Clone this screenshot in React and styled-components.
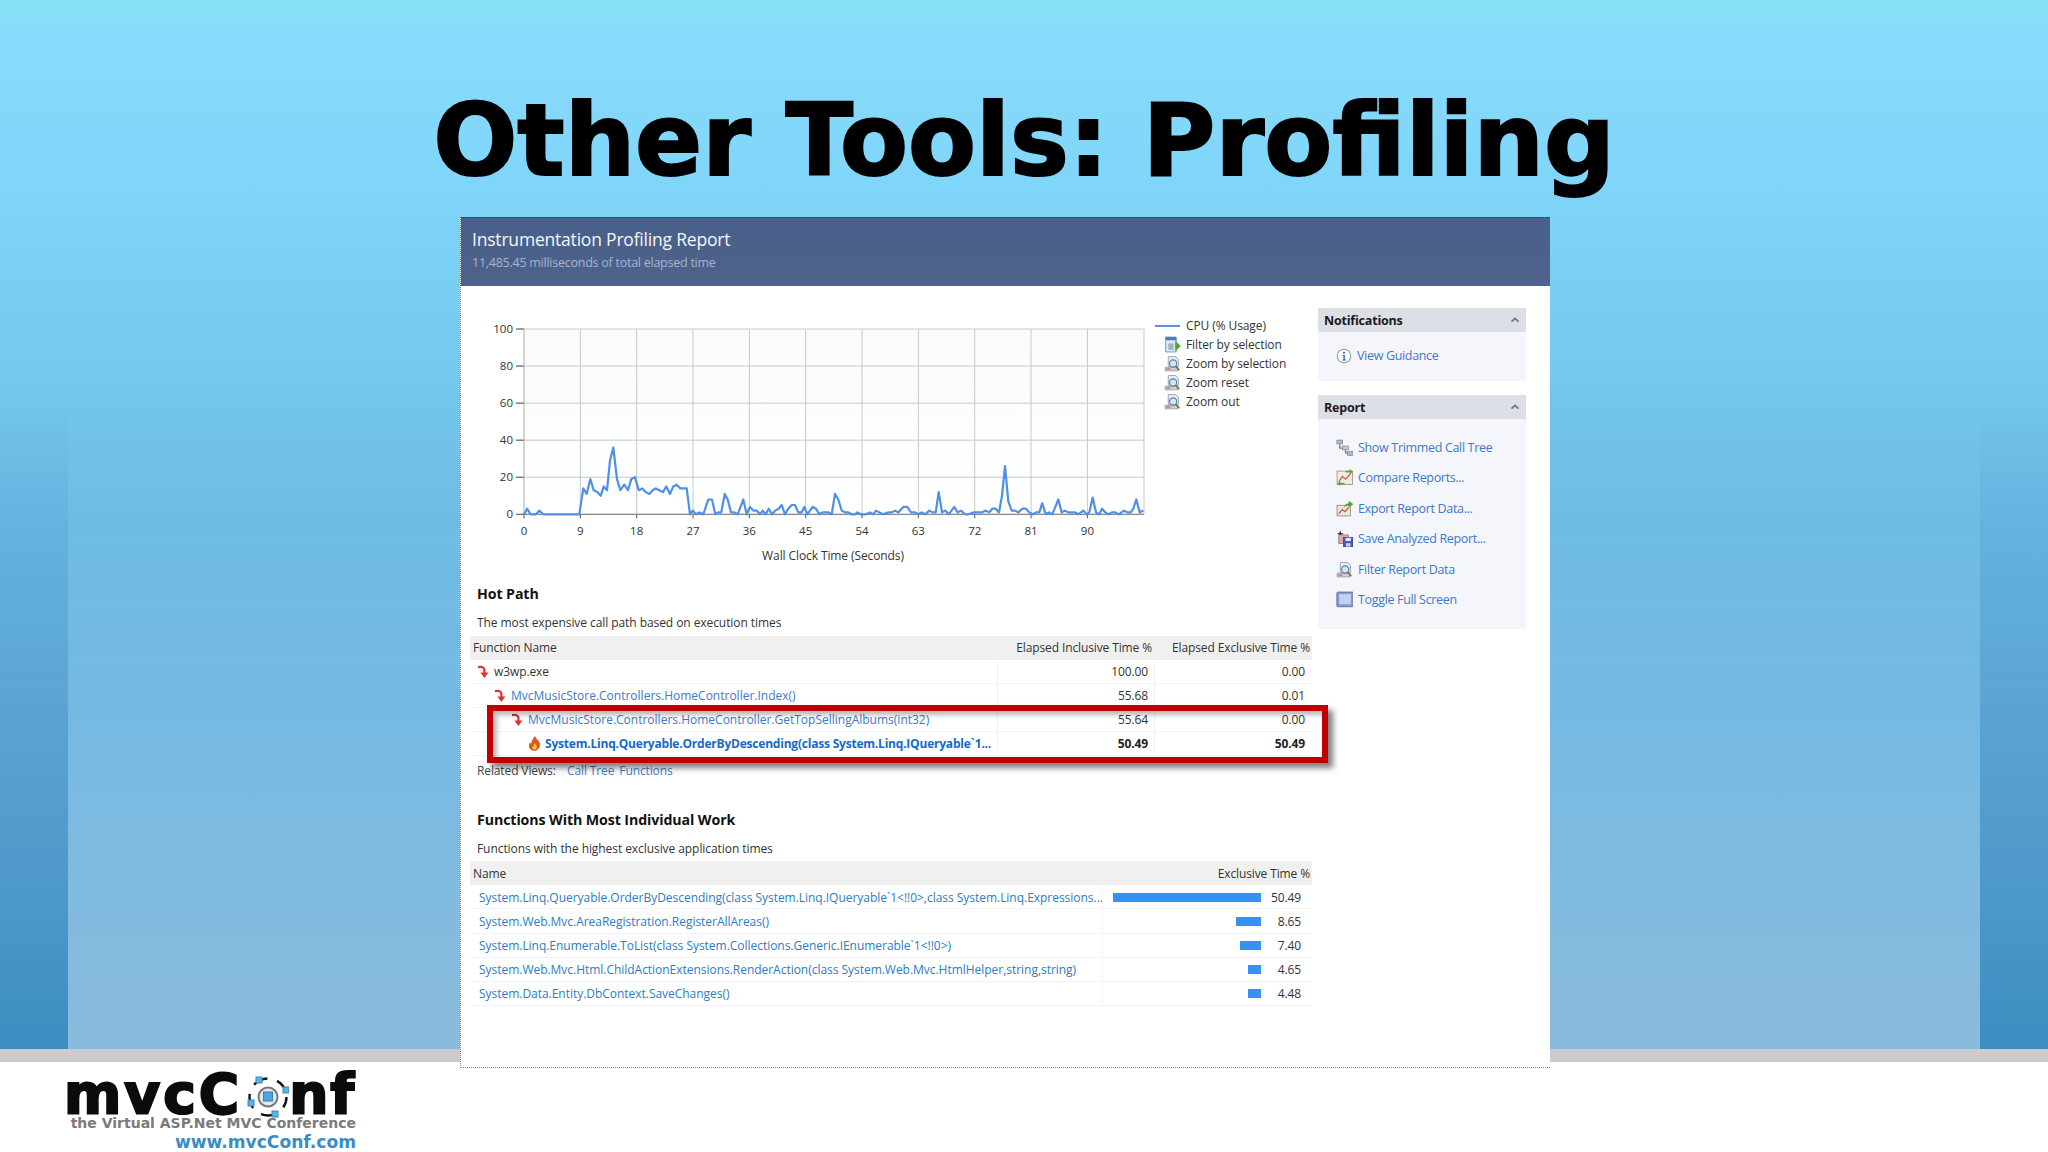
import React from "react";
import styled, { createGlobalStyle } from "styled-components";

const UI = `"Open Sans", "Noto Sans", sans-serif`;

const Global = createGlobalStyle`
  html, body { margin: 0; padding: 0; background: #fff; }
  * { box-sizing: border-box; }
`;

const Slide = styled.div`
  width: 2048px;
  height: 1152px;
  overflow: hidden;
  display: flex;
  flex-direction: column;
  font-family: ${UI};
  background:
    linear-gradient(#cdcbcb, #cdcbcb) 0 1049px / 100% 13px no-repeat,
    linear-gradient(rgba(60,141,194,0) 0, rgba(60,141,194,0) 400px, #3c8dc2 1049px) 0 0 / 68px 1049px no-repeat,
    linear-gradient(rgba(60,141,194,0) 0, rgba(60,141,194,0) 400px, #3c8dc2 1049px) 100% 0 / 68px 1049px no-repeat,
    linear-gradient(#82e2f5 0, #88dcfb 30px, #80d6fa 180px, #78cdf2 300px, #6ebce6 520px, #74b9e3 700px, #80bbe0 880px, #8abbdc 1049px) 0 0 / 100% 1049px no-repeat,
    #fff;
`;

const Title = styled.h1`
  margin: 0;
  height: 218px;
  padding-top: 91px;
  text-align: center;
  font: bold 99px/1 "DejaVu Sans", sans-serif;
  color: #000;
  -webkit-text-stroke: 2px #000;
`;

const Panel = styled.section`
  margin-left: 460px;
  width: 1090px;
  height: 851px;
  flex: none;
  background: #fff;
  border-left: 1px dotted #7a8a90;
  border-bottom: 1px dotted #888;
`;

const PanelHeader = styled.header`
  height: 69px;
  padding: 10px 0 0 11px;
  background: linear-gradient(#47608a, #4f628b);
  border-top: 1px dotted #2c3a55;
`;

const PanelTitle = styled.div`
  font-size: 17.5px;
  line-height: 22px;
  color: #f4f6fa;
  letter-spacing: -0.2px;
`;

const PanelSub = styled.div`
  margin-top: 5px;
  font-size: 12.5px;
  line-height: 16px;
  color: #a6b4cd;
  letter-spacing: -0.25px;
`;

const PanelBody = styled.div`
  display: flex;
`;

const Main = styled.div`
  width: 857px;
  padding-top: 24px;
  flex: none;
`;

const ChartBlock = styled.div`
  display: flex;
  height: 274px;
  margin-left: 9px;
  gap: 5px;
`;

const ChartSvg = styled.svg`
  width: 680px;
  height: 260px;
  flex: none;
  overflow: visible;
  font-family: ${UI};
  font-size: 11.5px;
  fill: #333;
`;

const Legend = styled.div`
  margin-top: 6px;
  flex: none;
  width: 170px;
`;

const LegendRow = styled.div`
  display: grid;
  grid-template-columns: 26px 1fr;
  column-gap: 5px;
  align-items: center;
  height: 19px;
  font-size: 12px;
  letter-spacing: -0.1px;
  color: #333;
  white-space: nowrap;
  & > svg { justify-self: end; }
`;

const LegendLine = styled.span`
  display: block;
  height: 2px;
  width: 25px;
  background: #5c8fdc;
`;

const Section = styled.div`
  padding-left: 16px;
  margin-top: ${p => p.$top || 0}px;
`;

const Heading = styled.h2`
  margin: 0;
  font-size: 14.2px;
  font-weight: 700;
  line-height: 20px;
  color: #111;
  letter-spacing: -0.1px;
`;

const Caption = styled.p`
  margin: 9px 0 2.5px;
  font-size: 12px;
  line-height: 20px;
  color: #333;
  letter-spacing: -0.07px;
`;

const TableWrap = styled.div`
  position: relative;
  margin-left: -7px;
  width: 842px;
`;

const HeadRow = styled.div`
  display: grid;
  grid-template-columns: ${p => p.$cols};
  height: 24px;
  align-items: center;
  background: #f0f0f0;
  font-size: 12px;
  letter-spacing: -0.12px;
  color: #333;
`;

const HeadCell = styled.div`
  padding: 0 ${p => p.$right ? "2px" : "0"} 0 ${p => p.$right ? "0" : "3px"};
  text-align: ${p => p.$right ? "right" : "left"};
  white-space: nowrap;
`;

const Row = styled.div`
  display: grid;
  grid-template-columns: ${p => p.$cols};
  height: 24.1px;
  padding-top: 1px;
  align-items: stretch;
  border-bottom: 1px solid #f2f4f6;
  font-size: 12px;
  letter-spacing: -0.1px;
  color: #333;
`;

const NameCell = styled.div`
  display: flex;
  align-items: center;
  gap: 4px;
  padding-left: ${p => p.$indent}px;
  white-space: nowrap;
  overflow: hidden;
`;

const NumCell = styled.div`
  display: flex;
  align-items: center;
  justify-content: flex-end;
  padding-right: ${p => p.$pad || 6}px;
  border-left: 1px solid #f0f2f4;
  font-weight: ${p => p.$bold ? 700 : 400};
  color: ${p => p.$bold ? "#222" : "#333"};
`;

const PlainName = styled.span`
  color: #333;
`;

const FuncLink = styled.a`
  color: ${p => p.$bold ? "#1669c7" : "#3f78cc"};
  font-weight: ${p => p.$bold ? 700 : 400};
  letter-spacing: ${p => p.$bold ? "-0.21px" : "0"};
`;

const WorkLink = styled.a`
  color: #2c7cc6;
  letter-spacing: -0.03px;
`;

const Highlight = styled.div`
  position: absolute;
  left: 17px;
  top: 69px;
  width: 841px;
  height: 58px;
  border: 6.5px solid #c00000;
  box-shadow: 5px 5px 6px rgba(0,0,0,.5), inset 4px 4px 5px rgba(0,0,0,.28);
  pointer-events: none;
`;

const Related = styled.div`
  display: flex;
  margin-top: 5px;
  height: 20px;
  align-items: center;
  font-size: 12px;
  letter-spacing: -0.12px;
  color: #444;
`;

const RelatedLabel = styled.span`
  width: 90px;
`;

const RelatedLink = styled.a`
  color: #3f86c8;
  margin-right: 5px;
`;

const BarCell = styled.div`
  display: grid;
  grid-template-columns: 158px 1fr;
  align-items: center;
  border-left: 1px solid #f0f2f4;
`;

const BarTrack = styled.div`
  display: flex;
  justify-content: flex-end;
`;

const Bar = styled.div`
  height: 9px;
  background: #3592f5;
`;

const BarValue = styled.span`
  text-align: right;
  padding-right: 11px;
`;

const Side = styled.aside`
  width: 208px;
  padding-top: 22px;
  flex: none;
  display: flex;
  flex-direction: column;
  gap: 14px;
`;

const Card = styled.div`
  background: #f5f6fb;
  padding-bottom: ${p => p.$pb}px;
`;

const CardHead = styled.div`
  display: flex;
  justify-content: space-between;
  align-items: center;
  height: 24px;
  padding: 0 6px 0 6px;
  background: #dcdfe5;
  font-size: 12.5px;
  font-weight: 700;
  letter-spacing: -0.2px;
  color: #1a1a1a;
`;

const CardBody = styled.div`
  padding: ${p => p.$pt}px 0 0 18px;
`;

const ActionRow = styled.div`
  display: flex;
  align-items: center;
  gap: 5px;
  height: 30.5px;
  font-size: 12.5px;
  letter-spacing: -0.33px;
  color: #3f78cc;
  white-space: nowrap;
`;

const Footer = styled.footer`
  padding: 6px 0 0 68px;
`;

const Logo = styled.div`
  width: 288px;
  display: flex;
  flex-direction: column;
  align-items: flex-end;
`;

const LogoWord = styled.div`
  display: flex;
  width: 292px;
  height: 42px;
  align-items: flex-end;
  font: bold 55px/42px "DejaVu Sans", sans-serif;
  color: #0b0b0b;
  -webkit-text-stroke: 2.2px #0b0b0b;
  white-space: nowrap;
`;

const LogoPart = styled.span`
  letter-spacing: ${p => p.$ls}px;
  line-height: 44px;
`;

const LogoTag = styled.div`
  margin-top: 0;
  font: bold 14px/15px "DejaVu Sans", sans-serif;
  color: #7b7b7b;
  white-space: nowrap;
`;

const LogoUrl = styled.div`
  margin-top: 1px;
  font: bold 17.1px/20px "DejaVu Sans", sans-serif;
  color: #3a8cc4;
  white-space: nowrap;
`;

/* ---------- icons ---------- */

const Ic = ({ w = 14, h = 14, vb = "0 0 16 16", children }) => (
  <svg width={w} height={h} viewBox={vb} style={{ flex: "none" }}>{children}</svg>
);

const HotArrow = () => (
  <Ic w={13} h={14} vb="0 0 13 14">
    <path d="M1 2.2 C4 1.6 7 1.8 7.4 4.4 L7.4 8" fill="none" stroke="#d8362c" strokeWidth="2.2" />
    <path d="M3.4 7.4 L11.4 7.4 L7.4 13 Z" fill="#d8362c" />
  </Ic>
);

const Flame = () => (
  <Ic w={13} h={15} vb="0 0 13 15">
    <path d="M6.8 .6 C7.4 3 9.2 3.4 10.6 5.6 C12.6 8.8 11.4 14 6.4 14.4 C1.8 14.4 .4 10.2 2 7 C2.6 8 3 8.4 3.6 8.6 C3.4 5.6 5.2 3.4 6.8 .6 Z" fill="#e2571e" stroke="#c9361a" strokeWidth=".7" />
    <path d="M6.6 7 C7.4 8.4 9 9.2 8.8 11.2 C8.6 13 7.4 13.6 6.4 13.6 C4.8 13.6 3.8 12.2 4.4 10.4 C5 10.8 5.4 10.8 5.6 10.6 C5.4 9.4 6 8 6.6 7 Z" fill="#fbc64a" />
  </Ic>
);

const Magnify = () => (
  <>
    <path d="M4 1.5 H11 L13.5 4 V11 H4 Z" fill="#e8eef5" stroke="#8d99a8" strokeWidth=".8" />
    <path d="M1 11.5 H13 V15 H1 Z" fill="#c9ced8" stroke="#8b8f9c" strokeWidth=".6" />
    <path d="M2 13.2 H6" stroke="#c85a5a" strokeWidth="1" />
    <circle cx="8.6" cy="8" r="3.4" fill="#cfe8f7" stroke="#5f7f9e" strokeWidth="1.1" />
    <path d="M11 10.6 L14.4 14.4" stroke="#8a6a24" strokeWidth="1.6" />
  </>
);

const ZoomIcon = () => <Ic w={17} h={17}><Magnify /></Ic>;

const FilterIcon = () => (
  <Ic w={17} h={17}>
    <path d="M1.5 1 H11.5 V15 H1.5 Z" fill="#dfe9f5" stroke="#6f8fb8" strokeWidth=".8" />
    <path d="M1.5 1 H11.5 V4 H1.5 Z" fill="#4c7cc0" />
    <path d="M4 7 H9 V13 H4 Z" fill="#9fb4cc" />
    <path d="M10.5 4.5 L15.8 9.5 L10.5 14.5 Z" fill="#48a832" />
  </Ic>
);

const InfoIcon = () => (
  <Ic w={16} h={16}>
    <circle cx="8" cy="8" r="6.8" fill="#fbfcfe" stroke="#8d9db5" strokeWidth="1.1" />
    <circle cx="8" cy="4.8" r="1.1" fill="#4a70a8" />
    <path d="M6.6 7 H8.9 V11.4 H10 V12.4 H6.4 V11.4 H7.4 V8 H6.6 Z" fill="#4a70a8" />
  </Ic>
);

const TreeIcon = () => (
  <Ic w={17} h={17}>
    <path d="M3.5 5 V8.5 H8 M9 9 V13 H12" fill="none" stroke="#5a9a3c" strokeWidth="1.2" />
    <rect x=".8" y="1" width="5.4" height="3.6" fill="#aeb9cb" stroke="#6f7c92" strokeWidth=".6" />
    <rect x="6.2" y="6.6" width="5.4" height="3.6" fill="#c3ccda" stroke="#6f7c92" strokeWidth=".6" />
    <rect x="11" y="11.8" width="5" height="3.6" fill="#aeb9cb" stroke="#6f7c92" strokeWidth=".6" />
  </Ic>
);

const CompareIcon = () => (
  <Ic w={17} h={17}>
    <rect x="1" y="2" width="14.5" height="12.5" fill="#f4ecdf" stroke="#9a9488" strokeWidth=".8" />
    <path d="M2.5 12 L6 7 L9 9.5 L14 4" fill="none" stroke="#d25050" strokeWidth="1.1" />
    <path d="M9 1.6 H13 V0 L16 2.6 L13 5 V3.4 H9 Z" fill="#58a83c" />
    <path d="M8 13 H4 V11.4 L1 13.8 L4 16 V14.6 H8 Z" fill="#58a83c" />
  </Ic>
);

const ExportIcon = () => (
  <Ic w={17} h={17}>
    <rect x="1" y="5" width="12.5" height="10" fill="#ece6dc" stroke="#8e8a80" strokeWidth=".8" />
    <path d="M2.5 13 L6 9 L8.5 11 L12 7" fill="none" stroke="#d25050" strokeWidth="1.2" />
    <path d="M7.5 7 C8 4 10 3 12 3 V.8 L16.2 4 L12 7 V5.2 C10.4 5.2 9 5.8 7.5 7 Z" fill="#4ea636" />
  </Ic>
);

const SaveIcon = () => (
  <Ic w={17} h={17}>
    <path d="M4 .6 L5 3 L7.4 3.4 L5 4.4 L4 6.8 L3 4.4 L.8 3.4 L3 3 Z" fill="#1c2230" />
    <rect x="2.6" y="4.6" width="9" height="8" fill="#d9a9a9" stroke="#8e6f78" strokeWidth=".7" />
    <rect x="7" y="7" width="9" height="9" fill="#4a56b8" stroke="#2f3680" strokeWidth=".6" />
    <rect x="9" y="7.4" width="5" height="3" fill="#e7eaf6" />
    <rect x="9.4" y="12.4" width="4.2" height="3.2" fill="#c7cce6" />
  </Ic>
);

const FullIcon = () => (
  <Ic w={17} h={17}>
    <rect x=".8" y="1" width="15.4" height="13.8" rx="1" fill="#8d99c8" stroke="#5a6aa0" strokeWidth=".8" />
    <rect x="3" y="3" width="11" height="9.4" fill="#bcd4f2" />
  </Ic>
);

const Chevron = () => (
  <Ic w={10} h={9} vb="0 0 10 9">
    <path d="M1.5 5.6 L5 2.4 L8.5 5.6" fill="none" stroke="#6f7580" strokeWidth="1.8" />
  </Ic>
);

/* ---------- chart data ---------- */

const partA = [[73,0],[81,3],[92,0],[108,0],[118,2],[130,0],[238,0],[250,14],[260,11],[271,19],[281,13],[292,12],[302,10],[311,15],[321,13],[330,29],[340,36],[351,19],[361,13],[373,16],[384,13],[394,19],[405,20],[416,13],[427,14],[437,12],[448,11],[458,13],[467,14],[478,13],[489,12],[499,15],[510,11],[520,15],[530,16],[541,14],[552,14],[560,14],[570,0],[578,2],[588,0],[598,1],[610,0],[625,8],[636,8],[646,0],[655,1],[664,1],[674,11],[683,8],[693,1],[703,1],[713,0],[730,8],[740,0],[750,4],[760,2],[770,2],[780,0],[788,2],[797,0],[806,3],[816,0],[826,2],[836,3],[845,5],[855,0],[865,3],[875,5],[885,5],[895,1],[905,1],[913,4],[922,0],[938,4],[948,3],[958,0],[968,1],[985,1],[995,0],[1005,11],[1015,8],[1025,2],[1035,1],[1045,1],[1055,0],[1065,0],[1072,1],[1082,0],[1098,0],[1110,1],[1120,0],[1128,2],[1138,1],[1150,0],[1165,1],[1175,1],[1185,2],[1195,1]];
const partB = [[160,4],[172,4],[183,1],[195,1],[205,0],[215,1],[225,0],[238,2],[248,1],[257,1],[266,12],[276,1],[286,2],[296,0],[313,4],[323,1],[333,2],[345,0],[355,0],[372,1],[385,1],[396,1],[407,2],[417,1],[427,3],[437,3],[447,1],[456,10],[465,26],[475,7],[485,2],[495,2],[505,1],[517,3],[528,3],[538,1],[548,0],[558,1],[568,1],[577,6],[587,0],[597,1],[607,0],[625,8],[635,1],[645,2],[655,1],[665,1],[675,1],[685,0],[700,2],[710,0],[718,1],[728,9],[738,1],[748,0],[756,3],[766,1],[776,0],[786,1],[796,1],[806,0],[822,2],[832,1],[842,1],[850,3],[859,8],[869,1],[880,2]];

const PL = 54, PR = 674, PT = 19, PB = 204.3;
const yOf = v => PB - (v / 100) * (PB - PT);
const linePts = [
  ...partA.map(([x, v]) => [30 + x / 3, yOf(v)]),
  ...partB.map(([x, v]) => [380 + x / 3, yOf(v)]),
].map(([x, y]) => `${x.toFixed(1)},${y.toFixed(1)}`).join(" ");

const xTicks = [0, 9, 18, 27, 36, 45, 54, 63, 72, 81, 90];
const xAt = t => PL + t * 6.26;
const yTicks = [100, 80, 60, 40, 20, 0];

const Chart = () => (
  <ChartSvg viewBox="0 0 680 260">
    <defs>
      <linearGradient id="plotbg" x1="0" y1="0" x2="0" y2="1">
        <stop offset="0" stopColor="#f9fbfc" />
        <stop offset="1" stopColor="#ffffff" />
      </linearGradient>
    </defs>
    <rect x={PL} y={PT} width={PR - PL} height={PB - PT} fill="url(#plotbg)" />
    {yTicks.map(v => (
      <g key={v}>
        <line x1={PL - 8} x2={PR} y1={yOf(v)} y2={yOf(v)} stroke="#c6c8ca" />
        <line x1={PL - 8} x2={PL} y1={yOf(v)} y2={yOf(v)} stroke="#555" />
        <text x={PL - 11} y={yOf(v) + 4} textAnchor="end">{v}</text>
      </g>
    ))}
    <line x1={PR} x2={PR} y1={PT} y2={PB} stroke="#c6c8ca" />
    <line x1={PL} x2={PL} y1={PT} y2={PB} stroke="#a8aaac" />
    <line x1={PL} x2={PR} y1={PB} y2={PB} stroke="#777" />
    {xTicks.map(t => (
      <g key={t}>
        {t > 0 && <line x1={xAt(t)} x2={xAt(t)} y1={PT} y2={PB} stroke="#c6c8ca" />}
        <line x1={xAt(t)} x2={xAt(t)} y1={PB} y2={PB + 4} stroke="#555" />
        <text x={xAt(t)} y={PB + 21} textAnchor="middle">{t}</text>
      </g>
    ))}
    <polyline points={linePts} fill="none" stroke="#4f90e6" strokeWidth="2.2" strokeLinejoin="round" />
    <text x="363" y="250" textAnchor="middle" fontSize="12" letterSpacing="-.1">Wall Clock Time (Seconds)</text>
  </ChartSvg>
);

/* ---------- content ---------- */

const hotCols = "527px 157px 158px";
const workCols = "632px 210px";

const hotRows = [
  { indent: 7, icon: <HotArrow />, plain: "w3wp.exe", a: "100.00", b: "0.00" },
  { indent: 24, icon: <HotArrow />, link: "MvcMusicStore.Controllers.HomeController.Index()", a: "55.68", b: "0.01" },
  { indent: 41, icon: <HotArrow />, link: "MvcMusicStore.Controllers.HomeController.GetTopSellingAlbums(int32)", a: "55.64", b: "0.00" },
  { indent: 58, icon: <Flame />, link: "System.Linq.Queryable.OrderByDescending(class System.Linq.IQueryable`1...", a: "50.49", b: "50.49", bold: true },
];

const workRows = [
  { name: "System.Linq.Queryable.OrderByDescending(class System.Linq.IQueryable`1<!!0>,class System.Linq.Expressions...", w: 148, v: "50.49" },
  { name: "System.Web.Mvc.AreaRegistration.RegisterAllAreas()", w: 25, v: "8.65" },
  { name: "System.Linq.Enumerable.ToList(class System.Collections.Generic.IEnumerable`1<!!0>)", w: 21, v: "7.40" },
  { name: "System.Web.Mvc.Html.ChildActionExtensions.RenderAction(class System.Web.Mvc.HtmlHelper,string,string)", w: 13, v: "4.65" },
  { name: "System.Data.Entity.DbContext.SaveChanges()", w: 13, v: "4.48" },
];

const legendItems = [
  [<FilterIcon />, "Filter by selection"],
  [<ZoomIcon />, "Zoom by selection"],
  [<ZoomIcon />, "Zoom reset"],
  [<ZoomIcon />, "Zoom out"],
];

const reportItems = [
  [<TreeIcon />, "Show Trimmed Call Tree"],
  [<CompareIcon />, "Compare Reports..."],
  [<ExportIcon />, "Export Report Data..."],
  [<SaveIcon />, "Save Analyzed Report..."],
  [<ZoomIcon />, "Filter Report Data"],
  [<FullIcon />, "Toggle Full Screen"],
];

const LogoRing = () => (
  <svg width="42" height="44" viewBox="0 0 42 44" style={{ flex: "none", margin: "0 0 -2px 5px" }}>
    <circle cx="21" cy="23" r="18.5" fill="none" stroke="#111" strokeWidth="2.4" strokeDasharray="15 10" strokeDashoffset="4" />
    <circle cx="21" cy="23" r="9.5" fill="#e8e8ea" stroke="#777" strokeWidth="2" />
    <rect x="16.5" y="18" width="9" height="9" fill="#4aa6dc" stroke="#2f7fb4" />
    <rect x="9" y="3" width="6" height="6" fill="#58b4e4" stroke="#3888bc" />
    <rect x="36" y="13" width="6" height="6" fill="#58b4e4" stroke="#3888bc" />
    <rect x="1" y="26" width="6" height="6" fill="#58b4e4" stroke="#3888bc" />
    <rect x="25" y="37" width="6" height="6" fill="#58b4e4" stroke="#3888bc" />
  </svg>
);

export default function App() {
  return (
    <Slide>
      <Global />
      <Title>Other Tools: Profiling</Title>
      <Panel>
        <PanelHeader>
          <PanelTitle>Instrumentation Profiling Report</PanelTitle>
          <PanelSub>11,485.45 milliseconds of total elapsed time</PanelSub>
        </PanelHeader>
        <PanelBody>
          <Main>
            <ChartBlock>
              <Chart />
              <Legend>
                <LegendRow><LegendLine /><span>CPU (% Usage)</span></LegendRow>
                {legendItems.map(([icon, label]) => (
                  <LegendRow key={label}>{icon}<span>{label}</span></LegendRow>
                ))}
              </Legend>
            </ChartBlock>

            <Section>
              <Heading>Hot Path</Heading>
              <Caption>The most expensive call path based on execution times</Caption>
              <TableWrap>
                <HeadRow $cols={hotCols}>
                  <HeadCell>Function Name</HeadCell>
                  <HeadCell $right>Elapsed Inclusive Time %</HeadCell>
                  <HeadCell $right>Elapsed Exclusive Time %</HeadCell>
                </HeadRow>
                {hotRows.map(r => (
                  <Row key={r.a + r.indent} $cols={hotCols}>
                    <NameCell $indent={r.indent}>
                      {r.icon}
                      {r.plain ? <PlainName>{r.plain}</PlainName> : <FuncLink $bold={r.bold}>{r.link}</FuncLink>}
                    </NameCell>
                    <NumCell $bold={r.bold}>{r.a}</NumCell>
                    <NumCell $bold={r.bold} $pad={7}>{r.b}</NumCell>
                  </Row>
                ))}
                <Highlight />
              </TableWrap>
              <Related>
                <RelatedLabel>Related Views:</RelatedLabel>
                <RelatedLink>Call Tree</RelatedLink>
                <RelatedLink>Functions</RelatedLink>
              </Related>
            </Section>

            <Section $top={29}>
              <Heading>Functions With Most Individual Work</Heading>
              <Caption>Functions with the highest exclusive application times</Caption>
              <TableWrap>
                <HeadRow $cols={workCols}>
                  <HeadCell>Name</HeadCell>
                  <HeadCell $right>Exclusive Time %</HeadCell>
                </HeadRow>
                {workRows.map(r => (
                  <Row key={r.v} $cols={workCols}>
                    <NameCell $indent={9}><WorkLink>{r.name}</WorkLink></NameCell>
                    <BarCell>
                      <BarTrack><Bar style={{ width: r.w }} /></BarTrack>
                      <BarValue>{r.v}</BarValue>
                    </BarCell>
                  </Row>
                ))}
              </TableWrap>
            </Section>
          </Main>

          <Side>
            <Card $pb={10}>
              <CardHead>Notifications<Chevron /></CardHead>
              <CardBody $pt={8.5}>
                <ActionRow><InfoIcon />View Guidance</ActionRow>
              </CardBody>
            </Card>
            <Card $pb={14}>
              <CardHead>Report<Chevron /></CardHead>
              <CardBody $pt={13}>
                {reportItems.map(([icon, label]) => (
                  <ActionRow key={label}>{icon}{label}</ActionRow>
                ))}
              </CardBody>
            </Card>
          </Side>
        </PanelBody>
      </Panel>
      <Footer>
        <Logo>
          <LogoWord>
            <LogoPart $ls={3}>mvcC</LogoPart>
            <LogoRing />
            <LogoPart $ls={2}>nf</LogoPart>
          </LogoWord>
          <LogoTag>the Virtual ASP.Net MVC Conference</LogoTag>
          <LogoUrl>www.mvcConf.com</LogoUrl>
        </Logo>
      </Footer>
    </Slide>
  );
}
